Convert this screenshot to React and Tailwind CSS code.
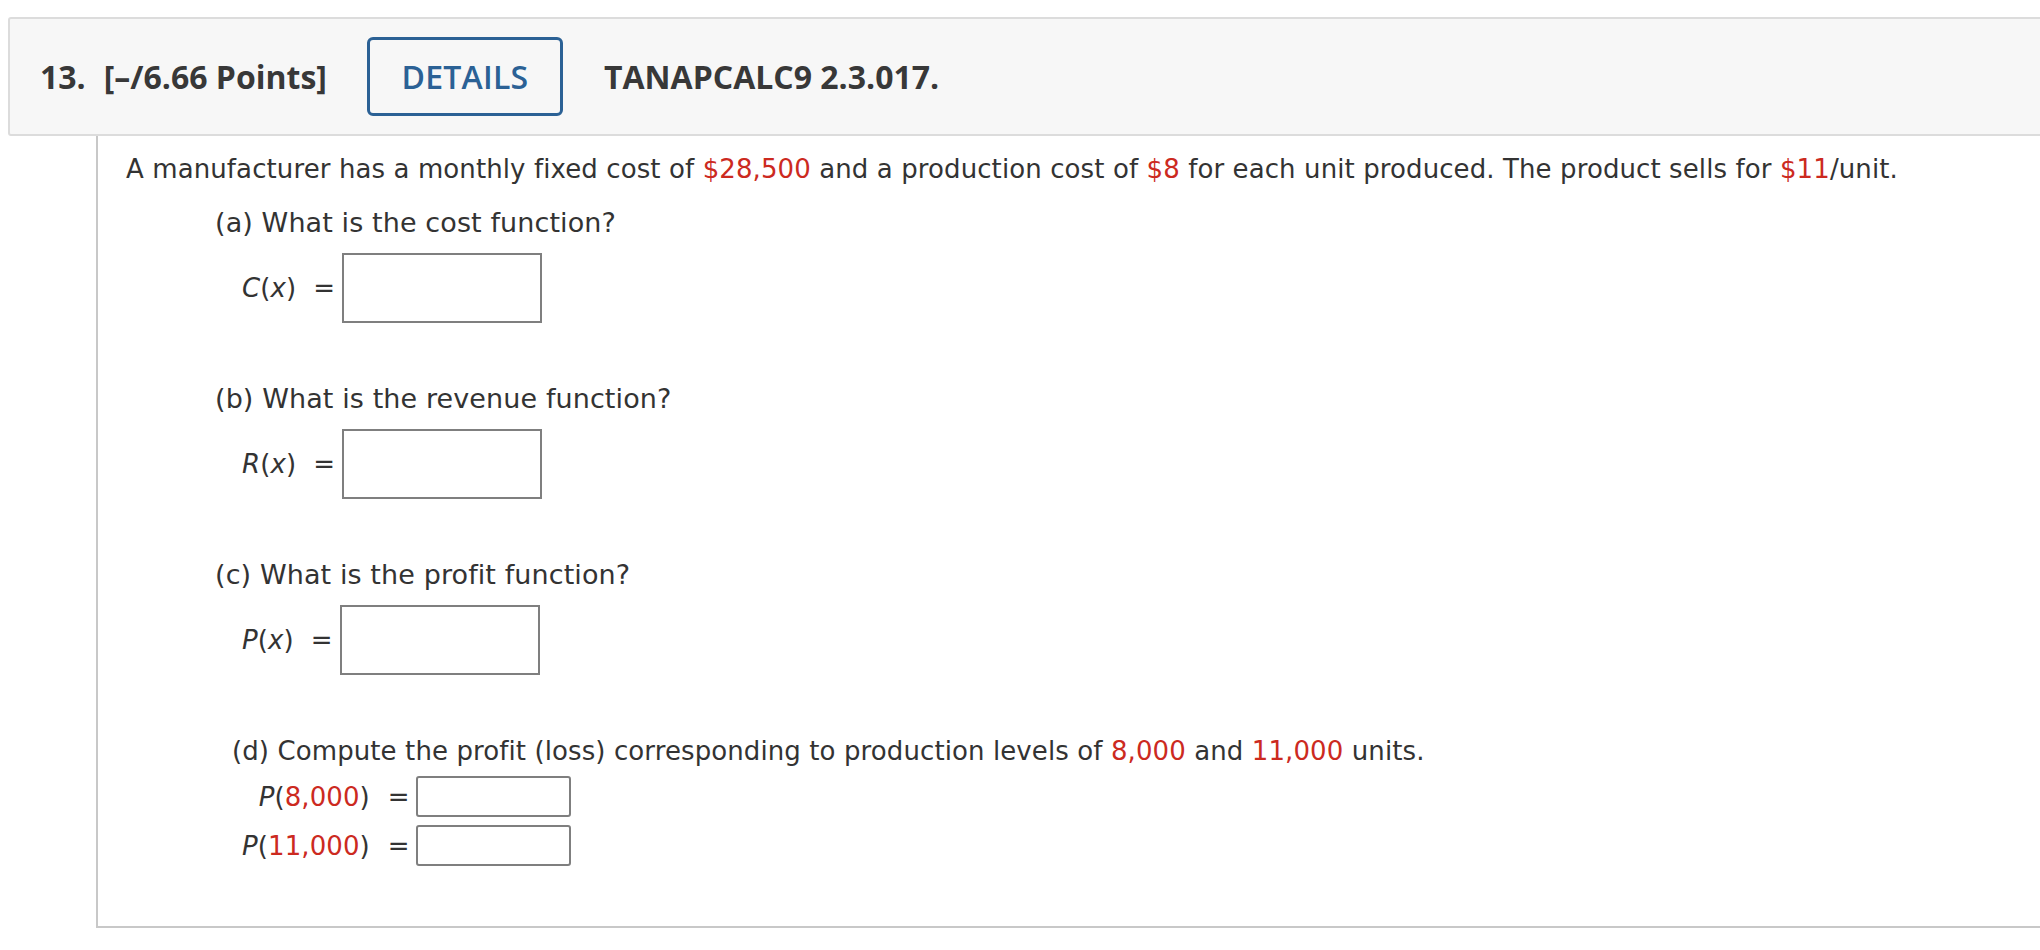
import React from 'react';

const Red = ({ children }) => <span className="text-[#cc2a1f]">{children}</span>;

const AnswerBox = ({ className = '' }) => (
  <div className={`border-2 border-[#7f7f7f] bg-white ${className}`} />
);

const FunctionPart = ({ question, label }) => (
  <div className="mb-[60px]">
    <p className="ml-[89px] text-[27px] leading-[32px]">{question}</p>
    <div className="ml-[116px] mt-[14px] flex items-center">
      <span className="leading-[32px]">{label}</span>
      <span className="ml-[17px] mr-[7px]">=</span>
      <AnswerBox className="w-[200px] h-[70px]" />
    </div>
  </div>
);

const App = () => {
  return (
    <div className="min-h-screen bg-white overflow-hidden pt-[17px] text-[#333]">
      {/* question header */}
      <div
        className="ml-[8px] mr-[-20px] flex items-center border-2 border-[#dcdcdc] rounded-[3px] bg-[#f7f7f7] py-[18px] pl-[30px] text-[32px] text-[#383838]"
        style={{ fontFamily: '"Open Sans", "Liberation Sans", sans-serif' }}
      >
        <span className="font-bold">13.</span>
        <span className="font-bold ml-[18px]">[–/6.66 Points]</span>
        <button className="ml-[40px] h-[79px] w-[196px] rounded-[6px] border-[3px] border-[#2b6195] text-[#2b6195] font-semibold tracking-[0.2px]">
          DETAILS
        </button>
        <span className="font-bold ml-[41px]">TANAPCALC9 2.3.017.</span>
      </div>

      {/* question body */}
      <div
        className="ml-[96px] mr-[-20px] border-l-2 border-b-2 border-[#c8c8c8] pt-[17px] pl-[28px] pb-[60px] text-[26px] tracking-[0.1px] leading-[32px]"
        style={{ fontFamily: '"DejaVu Sans", Verdana, sans-serif' }}
      >
        <p className="mb-[22px]">
          A manufacturer has a monthly fixed cost of <Red>$28,500</Red> and a production cost of <Red>$8</Red> for
          each unit produced. The product sells for <Red>$11</Red>/unit.
        </p>

        <FunctionPart
          question="(a) What is the cost function?"
          label={<><i>C</i>(<i>x</i>)</>}
        />
        <FunctionPart
          question="(b) What is the revenue function?"
          label={<><i>R</i>(<i>x</i>)</>}
        />
        <FunctionPart
          question="(c) What is the profit function?"
          label={<><i>P</i>(<i>x</i>)</>}
        />

        <div>
          <p className="ml-[106px]">
            (d) Compute the profit (loss) corresponding to production levels of <Red>8,000</Red> and{' '}
            <Red>11,000</Red> units.
          </p>
          <div className="ml-[116px] mt-[9px] grid grid-cols-[auto_auto_auto] justify-start items-center gap-y-[8px]">
            <span className="justify-self-end"><i>P</i>(<Red>8,000</Red>)</span>
            <span className="ml-[18px] mr-[6px]">=</span>
            <AnswerBox className="w-[155px] h-[41px] rounded-[3px]" />

            <span className="justify-self-end"><i>P</i>(<Red>11,000</Red>)</span>
            <span className="ml-[18px] mr-[6px]">=</span>
            <AnswerBox className="w-[155px] h-[41px] rounded-[3px]" />
          </div>
        </div>
      </div>
    </div>
  );
};

export default App;
